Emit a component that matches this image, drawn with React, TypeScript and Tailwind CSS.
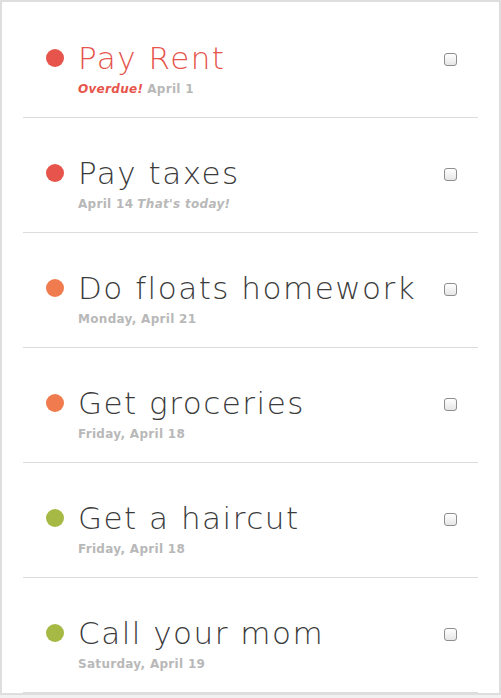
import React from 'react';

type Task = {
  title: string;
  color: string;
  overdue?: boolean;
  date: string;
  note?: string;
};

const tasks: Task[] = [
  { title: 'Pay Rent', color: 'bg-[#e6544b]', overdue: true, date: 'April 1' },
  { title: 'Pay taxes', color: 'bg-[#e6544b]', date: 'April 14', note: "That's today!" },
  { title: 'Do floats homework', color: 'bg-[#ef7b4f]', date: 'Monday, April 21' },
  { title: 'Get groceries', color: 'bg-[#ef7b4f]', date: 'Friday, April 18' },
  { title: 'Get a haircut', color: 'bg-[#a6b944]', date: 'Friday, April 18' },
  { title: 'Call your mom', color: 'bg-[#a6b944]', date: 'Saturday, April 19' },
];

const Checkbox: React.FC = () => (
  <span className="block w-[13px] h-[13px] rounded-[3px] border border-[#8e8e8e] bg-gradient-to-b from-white to-[#e6e6e6] shadow-[inset_0_1px_0_#fff]" />
);

const TaskRow: React.FC<{ task: Task }> = ({ task }) => (
  <li className="flex h-[115px] items-start border-b border-[#dcdcdc] pt-[34px]">
    <span className={`mt-[12px] ml-[23px] mr-[14px] w-[18px] h-[18px] rounded-full shrink-0 ${task.color}`} />
    <div className="flex-1">
      <div
        className={`font-['DejaVu_Sans',sans-serif] text-[31px] leading-[42px] tracking-[1.5px] font-extralight ${task.overdue ? 'text-[#e6544b]' : 'text-[#3b3b3b]'}`}
      >
        {task.title}
      </div>
      <div className="mt-[1px] font-['DejaVu_Sans',sans-serif] text-[12px] leading-[18px] tracking-[0.3px] font-bold text-[#b8b8b8]">
        {task.overdue && <em className="text-[#e6544b] mr-[4px]">Overdue!</em>}
        {task.date}
        {task.note && <em className="ml-[4px]">{task.note}</em>}
      </div>
    </div>
    <div className="mt-[16px] mr-[21px]">
      <Checkbox />
    </div>
  </li>
);

export default function App() {
  return (
    <div className="min-h-[698px] bg-[#f1f1f1]">
      <div className="w-[501px] border-2 border-[#dedede] bg-white pt-[1px]">
        <ul className="mx-[21px]">
          {tasks.map((t) => (
            <TaskRow key={t.title} task={t} />
          ))}
        </ul>
      </div>
    </div>
  );
}
